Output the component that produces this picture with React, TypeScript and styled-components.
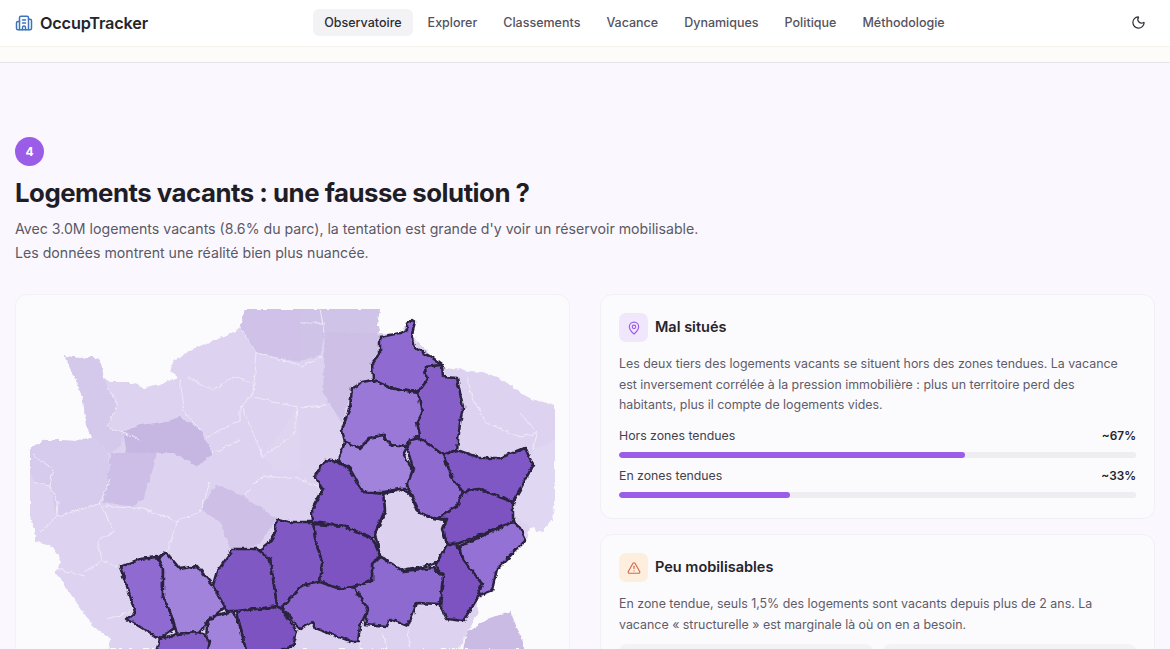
import React from 'react';
import styled, { createGlobalStyle } from 'styled-components';
import { Building2, MapPin, Moon, TriangleAlert } from 'lucide-react';

const GlobalStyle = createGlobalStyle`
  html, body {
    margin: 0;
    height: 649px;
    overflow: hidden;
    background: #faf8fe;
    font-family: Inter, "Noto Sans", sans-serif;
    color: #1f1d26;
  }
  * { box-sizing: border-box; }
`;

const Header = styled.header`
  height: 47px;
  padding: 0 15px 1px;
  display: flex;
  align-items: center;
  justify-content: space-between;
  background: #ffffff;
  border-bottom: 1px solid #f6f3ee;
`;

const Brand = styled.div`
  display: flex;
  align-items: center;
  gap: 7px;
  font-size: 16.3px;
  font-weight: 600;
  letter-spacing: -0.2px;
  color: #26242c;
  svg { color: #3f74bd; }
`;

const Nav = styled.nav`
  display: flex;
  align-items: center;
  gap: 4px;
  margin-right: 10px;
`;

const NavLink = styled.a<{ $active?: boolean }>`
  height: 27px;
  padding: 0 11px;
  display: flex;
  align-items: center;
  border-radius: 6px;
  font-size: 12.5px;
  font-weight: 500;
  color: ${p => (p.$active ? '#2e2c35' : '#55525e')};
  background: ${p => (p.$active ? '#f3f3f5' : 'transparent')};
`;

const ThemeButton = styled.button`
  width: 16px;
  padding: 0;
  margin-right: 8px;
  display: flex;
  border: none;
  background: none;
  color: #33313a;
`;

const Strip = styled.div`
  height: 16px;
  background: #fdfcf9;
  border-bottom: 1px solid #e7e4ea;
`;

const Section = styled.section`
  padding: 74px 15px 0;
`;

const StepBadge = styled.div`
  width: 29px;
  height: 29px;
  display: flex;
  align-items: center;
  justify-content: center;
  border-radius: 50%;
  background: #9b5ce8;
  color: #ffffff;
  font-size: 12px;
  font-weight: 700;
`;

const Title = styled.h2`
  margin: 11px 0 8px;
  font-size: 25.8px;
  line-height: 32px;
  font-weight: 700;
  letter-spacing: -0.5px;
  color: #1f1d26;
`;

const Intro = styled.p`
  margin: 0 0 30px;
  font-size: 14.15px;
  line-height: 23.5px;
  color: #5c5966;
`;

const Columns = styled.div`
  display: grid;
  grid-template-columns: 555px 555px;
  gap: 30px;
`;

const MapCard = styled.div`
  height: 420px;
  background: #fbfafc;
  border: 1px solid #f3f1f6;
  border-radius: 12px;
  svg { display: block; margin: -1px; }
`;

const Stack = styled.div`
  display: flex;
  flex-direction: column;
  gap: 15px;
`;

const Card = styled.div`
  padding: 18px 18px 20px;
  background: #fbfafc;
  border: 1px solid #f2f0f5;
  border-radius: 12px;
`;

const CardHead = styled.div`
  display: flex;
  align-items: center;
  gap: 7px;
  margin-bottom: 12px;
`;

const IconBox = styled.div<{ $bg: string; $fg: string }>`
  width: 29px;
  height: 29px;
  display: flex;
  align-items: center;
  justify-content: center;
  border-radius: 7px;
  background: ${p => p.$bg};
  color: ${p => p.$fg};
`;

const CardTitle = styled.h3`
  margin: 0;
  padding-bottom: 2px;
  font-size: 14.5px;
  font-weight: 600;
  color: #26242c;
`;

const CardText = styled.p`
  margin: 0;
  font-size: 12.4px;
  line-height: 20.7px;
  color: #5f5c69;
`;

const Metric = styled.div`
  margin-top: 8px;
  p + & { margin-top: 10px; }
`;

const MetricRow = styled.div`
  display: flex;
  justify-content: space-between;
  font-size: 12.3px;
  line-height: 20px;
  color: #44414d;
`;

const MetricValue = styled.span`
  font-size: 11.8px;
  font-weight: 600;
  color: #26242c;
`;

const Track = styled.div`
  height: 6px;
  margin-top: 6px;
  border-radius: 3px;
  background: #eeedf1;
  overflow: hidden;
`;

const Fill = styled.div`
  height: 100%;
  border-radius: 3px;
  background: #9b5ce8;
`;

const Tiles = styled.div`
  display: grid;
  grid-template-columns: 1fr 1fr;
  gap: 10px;
  margin-top: 8px;
`;

const Tile = styled.div`
  height: 64px;
  border-radius: 8px;
  background: #f3f2f5;
`;

const NAV = ['Observatoire', 'Explorer', 'Classements', 'Vacance', 'Dynamiques', 'Politique', 'Méthodologie'];

// page coordinates, the viewBox of the map starts at the card corner
const FRANCE =
  '243,309 380,309 378,320 380,333 400,333 408,322 416,340 433,358 445,368 470,371 482,372 500,378 510,385 527,398 555,405 555,469 552,519 543,532 530,527 527,540 497,569 492,590 477,600 478,612 470,629 463,649 108,649 110,639 93,626 72,596 55,572 62,562 52,547 35,541 35,529 30,519 30,448 45,440 60,440 75,441 92,437 86,425 83,400 78,385 70,368 65,356 80,358 92,357 100,360 104,378 110,382 130,382 145,388 160,385 178,377 170,372 173,362 190,350 215,340 238,330 246,316';

const LIGHT: { fill: string; pts: string }[] = [
  { fill: '#cfc1e8', pts: '245,309 300,309 300,362 257,353 240,328' },
  { fill: '#d4c8eb', pts: '65,356 80,358 92,357 100,360 104,378 108,388 118,403 108,427 123,433 122,445 110,453 92,437 86,425 83,400 78,385 70,368' },
  { fill: '#c6b6e2', pts: '123,432 140,425 163,422 180,417 200,430 212,453 197,467 187,460 173,453 157,453 127,453' },
  { fill: '#ccbee6', pts: '110,453 127,453 157,453 153,469 143,499 133,507 103,502 110,469' },
  { fill: '#cdbfe6', pts: '217,484 243,496 277,519 257,546 230,549 220,522 200,509' },
  { fill: '#cdbfe6', pts: '325,333 377,333 380,337 372,378 352,388 342,423 323,393' },
  { fill: '#d6cbec', pts: '30,448 45,440 60,440 75,441 92,437 108,452 110,469 103,502 57,516 50,486 33,482 30,470' },
  { fill: '#dfd5f1', pts: '263,457 297,407 300,440 300,470 275,470' },
  { fill: '#d0c3e8', pts: '300,309 380,309 378,320 380,333 325,333 320,355 300,362' },
  { fill: '#cabbe4', pts: '467,632 487,619 510,611 523,642 523,649 463,649' },
  { fill: '#e0d7f2', pts: '533,450 555,440 555,500 552,519 543,532 530,527 513,514' },
];

const GAP = '470,629 478,612 487,619 467,632 463,649 458,649';

const WHITE_LINES = [
  '180,380 185,413 200,430',
  '240,327 257,353 253,393 240,407 240,420 207,437',
  '257,353 300,365',
  '187,377 213,390 233,377 253,383',
  '253,397 297,407 295,433 263,457 242,407',
  '107,387 118,403 107,427 123,433',
  '33,482 50,486 58,502 57,516 40,532',
  '50,486 53,469 33,455',
  '57,516 100,504 115,532 97,541 103,562 120,567',
  '110,479 100,504',
  '103,506 143,509 177,521 200,512 210,482',
  '177,521 167,552',
  '85,572 100,562',
  '57,569 85,576',
  '130,612 107,619',
  '243,496 263,476 300,479 323,489',
  '467,377 473,400 487,423 520,437 537,433 533,450',
  '520,413 537,433',
  '320,310 325,333',
  '300,323 323,323',
  '300,367 323,357',
  '300,407 327,405',
  '383,632 387,649',
  '408,629 410,649',
  '463,636 463,649',
  '360,642 360,649',
  '140,440 123,433',
  '212,453 240,440',
];

const DARK: { fill: string; pts: string }[] = [
  { fill: '#8f6bd0', pts: '412,320 415,322 412,333 415,348 433,358 442,365 425,367 427,380 420,392 400,390 390,388 373,380 372,363 380,353 380,337 400,333 407,330 407,323' },
  { fill: '#8660c8', pts: '425,367 442,365 443,377 457,378 463,407 460,423 457,450 443,455 420,438 417,423 422,413 418,393 427,380' },
  { fill: '#9a78d8', pts: '373,380 390,388 400,390 418,393 422,413 417,423 420,435 410,440 407,447 390,445 383,435 370,438 360,448 345,442 342,430 350,407 352,388 362,382' },
  { fill: '#a183dc', pts: '345,442 360,448 370,438 383,435 390,445 407,447 403,455 413,470 413,489 400,489 383,492 363,492 350,469 338,460' },
  { fill: '#8f6bd0', pts: '407,447 410,440 420,438 443,455 453,469 463,492 457,506 437,519 420,513 407,486 413,469' },
  { fill: '#8059c6', pts: '443,455 457,450 480,458 500,458 525,448 533,465 520,490 513,502 478,489 463,492 453,479' },
  { fill: '#7b53c0', pts: '463,492 478,489 513,502 513,522 457,544 447,544 443,529 447,519 437,519 457,506' },
  { fill: '#9471d4', pts: '460,546 513,522 520,528 526,540 497,569 492,590 477,596 482,584 463,559' },
  { fill: '#7b53c0', pts: '447,544 457,544 463,559 482,584 477,599 463,621 447,619 440,606 443,576 435,566' },
  { fill: '#8d6ad0', pts: '380,556 403,571 433,568 443,576 440,604 417,603 408,626 390,619 387,626 365,624 368,609 353,587 372,581 372,564' },
  { fill: '#dcd2f0', pts: '383,494 400,489 410,493 418,512 433,519 445,521 442,529 447,544 437,562 423,567 403,571 380,556 375,534 385,512' },
  { fill: '#8059c6', pts: '325,460 338,462 350,470 363,492 383,494 385,510 373,538 343,526 313,522 312,509 323,490 315,476' },
  { fill: '#7b53c0', pts: '313,524 343,526 373,539 380,556 372,564 372,581 353,587 340,589 320,582 322,562 315,539' },
  { fill: '#7f58c4', pts: '277,519 293,522 313,522 315,539 322,562 320,582 300,586 297,592 282,607 277,606 270,559 257,552 273,539' },
  { fill: '#8a63cc', pts: '300,586 320,582 340,589 353,587 368,609 360,626 358,642 353,642 317,629 312,622 300,629 297,626 282,607 297,592' },
  { fill: '#7f58c4', pts: '217,572 233,549 257,549 270,559 277,606 257,609 237,611 227,611 212,589' },
  { fill: '#7b53c0', pts: '237,611 257,609 277,607 282,609 297,632 293,646 270,655 247,655 240,626' },
  { fill: '#a183dc', pts: '213,616 233,611 240,626 247,655 205,655 207,625' },
  { fill: '#8f6bd0', pts: '120,567 140,559 157,557 163,569 163,596 172,616 173,629 160,639 127,619 135,612 128,589' },
  { fill: '#a183dc', pts: '166,552 180,569 197,566 213,586 225,607 207,622 200,632 177,634 172,616 163,596 163,569 158,559' },
  { fill: '#8660c8', pts: '160,639 177,634 200,632 210,641 207,655 155,655' },
];

const DepartmentMap: React.FC = () => (
  <svg width={555} height={355} viewBox="15 294 555 355">
    <defs>
      <filter id="rough" x="0" y="0" width="1" height="1" filterUnits="objectBoundingBox">
        <feTurbulence type="fractalNoise" baseFrequency="0.17" numOctaves="3" seed="4" />
        <feDisplacementMap in="SourceGraphic" scale="4.5" xChannelSelector="R" yChannelSelector="G" />
      </filter>
    </defs>
    <g filter="url(#rough)">
      <polygon points={FRANCE} fill="#ddd3f0" />
      {LIGHT.map(r => (
        <polygon key={r.pts} points={r.pts} fill={r.fill} />
      ))}
      <polygon points={GAP} fill="#fbfafc" />
      {WHITE_LINES.map(l => (
        <polyline key={l} points={l} fill="none" stroke="#efe9f8" strokeWidth={1} />
      ))}
      {DARK.map(r => (
        <polygon key={r.pts} points={r.pts} fill={r.fill} stroke="#2a2340" strokeWidth={2.5} strokeLinejoin="round" />
      ))}
    </g>
  </svg>
);

const App: React.FC = () => (
  <>
    <GlobalStyle />
    <Header>
      <Brand>
        <Building2 size={18} />
        OccupTracker
      </Brand>
      <Nav>
        {NAV.map((item, i) => (
          <NavLink key={item} $active={i === 0}>{item}</NavLink>
        ))}
      </Nav>
      <ThemeButton aria-label="Thème">
        <Moon size={15} />
      </ThemeButton>
    </Header>
    <Strip />
    <Section>
      <StepBadge>4</StepBadge>
      <Title>Logements vacants : une fausse solution ?</Title>
      <Intro>
        Avec 3.0M logements vacants (8.6% du parc), la tentation est grande d'y voir un réservoir mobilisable.
        <br />
        Les données montrent une réalité bien plus nuancée.
      </Intro>
      <Columns>
        <MapCard>
          <DepartmentMap />
        </MapCard>
        <Stack>
          <Card>
            <CardHead>
              <IconBox $bg="#f1e7fd" $fg="#9b5ce8">
                <MapPin size={14} />
              </IconBox>
              <CardTitle>Mal situés</CardTitle>
            </CardHead>
            <CardText>
              Les deux tiers des logements vacants se situent hors des zones tendues. La vacance
              <br />
              est inversement corrélée à la pression immobilière : plus un territoire perd des
              <br />
              habitants, plus il compte de logements vides.
            </CardText>
            <Metric>
              <MetricRow>
                <span>Hors zones tendues</span>
                <MetricValue>~67%</MetricValue>
              </MetricRow>
              <Track><Fill style={{ width: '67%' }} /></Track>
            </Metric>
            <Metric>
              <MetricRow>
                <span>En zones tendues</span>
                <MetricValue>~33%</MetricValue>
              </MetricRow>
              <Track><Fill style={{ width: '33%' }} /></Track>
            </Metric>
          </Card>
          <Card>
            <CardHead>
              <IconBox $bg="#fdeedd" $fg="#d9694a">
                <TriangleAlert size={14} />
              </IconBox>
              <CardTitle>Peu mobilisables</CardTitle>
            </CardHead>
            <CardText>
              En zone tendue, seuls 1,5% des logements sont vacants depuis plus de 2 ans. La
              <br />
              vacance « structurelle » est marginale là où on en a besoin.
            </CardText>
            <Tiles>
              <Tile />
              <Tile />
            </Tiles>
          </Card>
        </Stack>
      </Columns>
    </Section>
  </>
);

export default App;
